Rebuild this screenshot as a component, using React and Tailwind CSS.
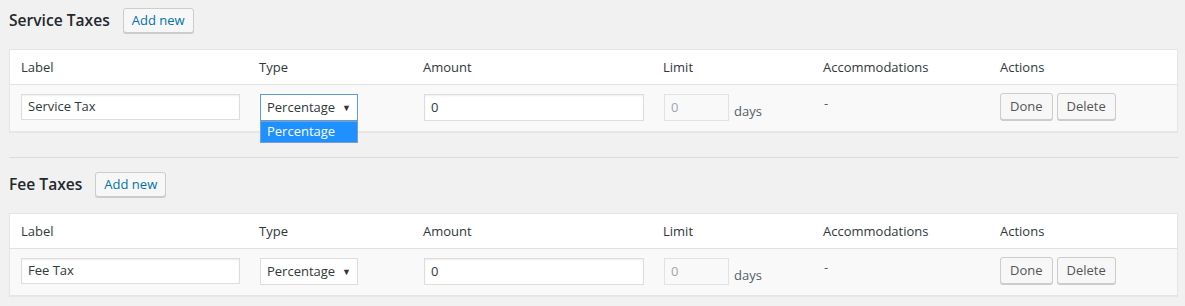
import React from "react";

const font = { fontFamily: '"Open Sans", "Noto Sans", "Liberation Sans", sans-serif' };

function Btn({ children, className = "" }) {
  return (
    <button
      className={
        "h-[27px] px-[9px] rounded-[3px] border border-[#cccccc] bg-[#f7f7f7] shadow-[0_1px_0_#cccccc] text-[13px] leading-none text-[#555555] " +
        className
      }
    >
      {children}
    </button>
  );
}

function Section({ title, label, open }) {
  return (
    <div>
      <div className="flex items-center gap-[13px]">
        <h2 className="text-[15.6px] font-semibold text-[#23282d] pl-[9px]">{title}</h2>
        <button className="h-[25px] px-[8px] rounded-[3px] border border-[#cccccc] bg-[#f7f7f7] shadow-[0_1px_0_#cccccc] text-[13px] leading-none text-[#0073aa]">
          Add new
        </button>
      </div>
      <div className="ml-[9px] mr-[7px] mt-[16px] border border-[#e5e5e5] bg-white shadow-[0_1px_1px_rgba(0,0,0,0.04)]">
        <div className="grid grid-cols-[238px_164px_240px_160px_177px_1fr] h-[35px] items-center pt-[2px] text-[13px] text-[#32373c] border-b border-[#e1e1e1]">
          <div className="pl-[11px]">Label</div>
          <div className="pl-[11px]">Type</div>
          <div className="pl-[11px]">Amount</div>
          <div className="pl-[11px]">Limit</div>
          <div className="pl-[11px]">Accommodations</div>
          <div className="pl-[11px]">Actions</div>
        </div>
        <div className="grid grid-cols-[238px_164px_240px_160px_177px_1fr] h-[46px] items-start pt-[9px] bg-[#f9f9f9] text-[13px] text-[#32373c]">
          <div className="pl-[11px]">
            <div className="w-[219px] h-[26px] border border-[#dddddd] bg-white shadow-[inset_0_1px_2px_rgba(0,0,0,0.07)] flex items-center px-[6px] text-[13px] text-[#32373c]">
              {label}
            </div>
          </div>
          <div className="pl-[12px] relative">
            <div
              className={
                "w-[98px] h-[27px] border bg-white flex items-center justify-between pl-[6px] pr-[6px] text-[13px] text-[#32373c] " +
                (open ? "border-[#5b9dd9]" : "border-[#dddddd]")
              }
            >
              <span>Percentage</span>
              <span className="text-[9px] text-[#333]">▼</span>
            </div>
            {open && (
              <div className="absolute left-[12px] top-[27px] w-[98px] h-[22px] bg-[#1e90ff] border border-[#7a9cd3] flex items-center pl-[6px] text-[13px] text-white">
                Percentage
              </div>
            )}
          </div>
          <div className="pl-[12px]">
            <div className="w-[220px] h-[27px] border border-[#dddddd] bg-white shadow-[inset_0_1px_2px_rgba(0,0,0,0.07)] flex items-center px-[6px] text-[13px] text-[#32373c]">
              0
            </div>
          </div>
          <div className="pl-[12px] flex items-end gap-[5px]">
            <div className="w-[65px] h-[27px] border border-[#e2e2e2] bg-[#f9f9f9] flex items-center px-[6px] text-[13px] text-[#a0a5aa]">
              0
            </div>
            <span className="text-[13px] text-[#555d66] leading-none mb-[3px]">days</span>
          </div>
          <div className="pl-[12px] text-[#555d66] leading-none pt-[3px]">-</div>
          <div className="pl-[11px] flex gap-[4px] -mt-[1px]">
            <Btn>Done</Btn>
            <Btn>Delete</Btn>
          </div>
        </div>
      </div>
    </div>
  );
}

export default function App() {
  return (
    <div className="w-[1185px] h-[306px] bg-[#f1f1f1] overflow-hidden" style={font}>
      <div className="pt-[8px]">
        <Section title="Service Taxes" label="Service Tax" open />
      </div>
      <div className="ml-[9px] mr-[6px] mt-[25px] border-t border-[#dcdcdc]" />
      <div className="pt-[14px]">
        <Section title="Fee Taxes" label="Fee Tax" open={false} />
      </div>
    </div>
  );
}
